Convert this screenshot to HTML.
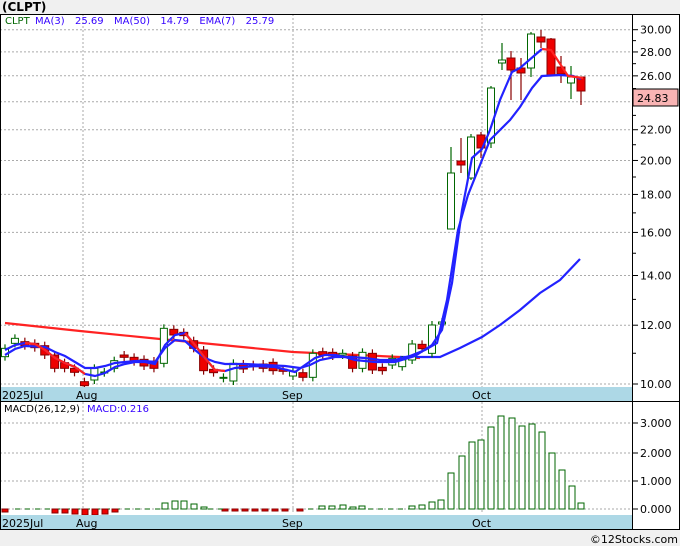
<!DOCTYPE html>
<html><head><style>
html,body{margin:0;padding:0;background:#f0f0f0;width:680px;height:546px;overflow:hidden}
svg{display:block}
text{font-family:"DejaVu Sans","Liberation Sans",sans-serif}
</style></head><body>
<svg id="s" width="680" height="546" xmlns="http://www.w3.org/2000/svg">
<rect x="0" y="0" width="680" height="546" fill="#f0f0f0"/>
<text x="2" y="11" font-size="12" font-weight="bold" fill="#000">(CLPT)</text>
<rect x="0" y="14" width="680" height="516" fill="#fff"/>
<g id="g"></g>
</svg>
<script>
var g=document.getElementById('g'),h='';
function Y(p){return 384-322.5*Math.log(p/10);}
[10,12,14,16,18,20,22,24,26,28,30].forEach(function(p){var y=Y(p).toFixed(1);h+='<line x1="0" x2="632" y1="'+y+'" y2="'+y+'" stroke="#aaa" stroke-dasharray="2,2"/>';});
[83,293,482].forEach(function(x){h+='<line x1="'+x+'" x2="'+x+'" y1="14" y2="387" stroke="#aaa" stroke-dasharray="2,2"/><line x1="'+x+'" x2="'+x+'" y1="402" y2="514" stroke="#aaa" stroke-dasharray="2,2"/>';});
[509,481,453,423].forEach(function(y){h+='<line x1="0" x2="632" y1="'+y+'" y2="'+y+'" stroke="#aaa" stroke-dasharray="2,2"/>';});
function pl(pts,c,w){h+='<polyline fill="none" stroke="'+c+'" stroke-width="'+(w||2.2)+'" points="'+pts.map(function(p){return p.join(',')}).join(' ')+'"/>';}
pl([[5,323],[80,331],[160,339],[293,352],[400,357],[420,358]],'#f22');
pl([[400,357],[440,357],[460,348],[482,337],[500,325],[520,310],[540,293],[560,280],[580,259]],'#22f');
var c4=[['G',145,170],['G',115,130],['R',125,137],['R',130,143],['R',137,165],['R',165,205],['R',188,205],['R',205,217],['R',245,257],['G',205,240],['D',216,218],['G',182,205],['R',165,172],['R',172,185],['R',178,198],['R',183,205],['G',85,190],['R',88,105],['R',97,107],['R',122,145],['R',150,212],['R',208,218],['G',232,235],['G',190,243],['R',192,207],['R',194,200],['R',192,205],['R',187,212],['R',208,212],['G',213,228],['R',218,232],['G',160,232],['R',155,165],['R',157,168],['G',160,165],['R',168,205],['G',157,205],['R',160,210],['R',202,212],['G',175,195],['G',180,200],['G',132,180],['R',133,146],['G',75,160]];
var cs=[];
c4.forEach(function(c,i){cs.push([5+i*9.93,c[0],300+c[1]/3,300+c[2]/3]);});
var rest=[[442,'G',322,324],[451,'G',173,229],[461,'R',161,165],[471,'G',137,178],[481,'R',135,148],[491,'G',88,143],[502,'G',60,63],[511,'R',58,70],[521,'R',68,73],[531,'G',34,68],[541,'R',37,42],[551,'R',39,75],[561,'R',67,74],[571,'G',77,83],[581,'R',77,91]];
cs=cs.concat(rest);
var wk={451:[147,229],461:[138,173],471:[134,180],481:[132,158],491:[86,148],502:[43,70],511:[51,100],521:[58,100],531:[32,77],541:[30,48],551:[38,75],561:[56,83],571:[66,99],581:[77,105]};
cs.forEach(function(c){var x=c[0],t=c[2],b=c[3];var k=Math.round(x);var w=wk[k]||[t-4,b+4];
var col=c[1]=='R'?'#800':'#060';
h+='<line x1="'+x+'" x2="'+x+'" y1="'+w[0]+'" y2="'+w[1]+'" stroke="'+col+'" stroke-width="1.2"/>';
if(c[1]=='R')h+='<rect x="'+(x-4)+'" y="'+t+'" width="8" height="'+Math.max(b-t,2)+'" fill="#e00" stroke="#800"/>';
else h+='<rect x="'+(x-3.5)+'" y="'+t+'" width="7" height="'+Math.max(b-t,1)+'" fill="#fff" stroke="#060"/>';});
pl([[5,355],[15,349],[25,346],[45,347],[55,352],[65,356],[75,362],[85,368],[95,368],[105,366],[115,363],[125,362],[135,361],[145,361],[155,362],[165,348],[175,340],[185,341],[195,350],[205,358],[215,362],[225,364],[235,364],[245,364],[265,365],[285,366],[300,368],[310,365],[320,360],[335,357],[350,357],[365,358],[380,360],[395,360],[410,356],[425,350],[437,343],[447,300],[458,230],[468,195],[478,170],[490,140],[500,130],[510,120],[520,107],[532,88],[542,76],[560,75],[573,76],[581,79]],'#22f');
pl([[5,350],[15,345],[25,343],[35,344],[45,350],[55,358],[65,363],[75,367],[85,374],[95,376],[105,373],[115,367],[125,364],[135,362],[145,362],[155,364],[165,345],[175,335],[185,333],[195,345],[205,358],[215,370],[225,371],[235,368],[255,366],[275,367],[295,372],[305,365],[315,358],[325,355],[335,355],[345,357],[355,360],[375,362],[395,362],[415,356],[432,345],[442,330],[452,283],[462,210],[472,158],[482,149],[490,130],[500,100],[512,72],[520,68],[542,49]],'#22f');
pl([[25,343],[35,344],[45,350],[55,358],[65,363],[75,367],[85,374]],'#f22');
pl([[185,333],[195,345],[205,358],[215,370],[225,371]],'#f22');
pl([[542,49],[551,50],[568,76],[583,78]],'#f22');
var mb=[[165,503],[175,501],[184,501],[194,504],[204,507],[322,506],[332,506],[343,505],[353,507],[362,506],[412,506],[422,505],[432,502],[441,500],[451,473],[462,456],[472,442],[481,440],[491,427],[501,416],[512,418],[522,426],[532,424],[542,432],[552,453],[562,470],[572,486],[581,503]];
mb.forEach(function(b){h+='<rect x="'+(b[0]-3)+'" y="'+b[1]+'" width="6" height="'+(509-b[1])+'" fill="#fff" stroke="#060"/>';});
for(var x=15;x<160;x+=10)h+='<line x1="'+x+'" x2="'+(x+5)+'" y1="509" y2="509" stroke="#060"/>';
[[5,512],[55,513],[65,513],[75,514],[85,515],[95,515],[105,514],[115,512],[225,511],[235,511],[245,511],[255,511],[265,511],[275,511],[285,511],[300,511]].forEach(function(b){h+='<rect x="'+(b[0]-3)+'" y="509" width="6" height="'+(b[1]-509)+'" fill="#e00" stroke="#800"/>';});
for(var x=208;x<420;x+=10){if(x<220||(x>305&&x<410))h+='<line x1="'+x+'" x2="'+(x+5)+'" y1="509" y2="509" stroke="#060"/>';}
h+='<rect x="0" y="387" width="632" height="14" fill="#add8e6"/><rect x="0" y="515" width="632" height="14" fill="#add8e6"/>';
[[2,'2025Jul'],[76,'Aug'],[282,'Sep'],[472,'Oct']].forEach(function(d){h+='<text x="'+d[0]+'" y="399" font-size="11" fill="#000">'+d[1]+'</text><text x="'+d[0]+'" y="527" font-size="11" fill="#000">'+d[1]+'</text>';});
h+='<line x1="0" x2="680" y1="14.5" y2="14.5" stroke="#000"/><line x1="0" x2="680" y1="401.5" y2="401.5" stroke="#000"/><line x1="0" x2="680" y1="529.5" y2="529.5" stroke="#000"/><line x1="632.5" x2="632.5" y1="14" y2="530" stroke="#000"/><line x1="0.5" x2="0.5" y1="14" y2="530" stroke="#000"/><line x1="679.5" x2="679.5" y1="14" y2="530" stroke="#000"/>';
[10,12,14,16,18,20,22,26,28,30].forEach(function(p){var y=Y(p);h+='<line x1="632" x2="638" y1="'+y+'" y2="'+y+'" stroke="#000"/><text x="640" y="'+(y+4)+'" font-size="11" fill="#000">'+p.toFixed(2)+'</text>';});
[11,13,15,17,19,21,23,25,27,29].forEach(function(p){var y=Y(p);h+='<line x1="632" x2="636" y1="'+y+'" y2="'+y+'" stroke="#000"/>';});
h+='<rect x="633" y="89" width="45" height="17" fill="#f9b4b4" stroke="#000"/><text x="637" y="102" font-size="11" fill="#000">24.83</text>';
[[509,'0.000'],[481,'1.000'],[453,'2.000'],[423,'3.000']].forEach(function(m){h+='<line x1="632" x2="638" y1="'+m[0]+'" y2="'+m[0]+'" stroke="#000"/><text x="640" y="'+(m[0]+4)+'" font-size="11" fill="#000">'+m[1]+'</text>';});
h+='<text x="5" y="24" font-size="10" fill="#060">CLPT</text><text x="35" y="24" font-size="10" fill="#30f" word-spacing="2">MA(3)&#160;&#160;25.69&#160;&#160;MA(50)&#160;&#160;14.79&#160;&#160;EMA(7)&#160;&#160;25.79</text>';
h+='<text x="4" y="412" font-size="10" fill="#000">MACD(26,12,9)</text><text x="87" y="412" font-size="10" fill="#30f">MACD:0.216</text>';
h+='<text x="678" y="543" font-size="11" fill="#000" text-anchor="end">©12Stocks.com</text>';
g.innerHTML=h;
</script>
</body></html>
